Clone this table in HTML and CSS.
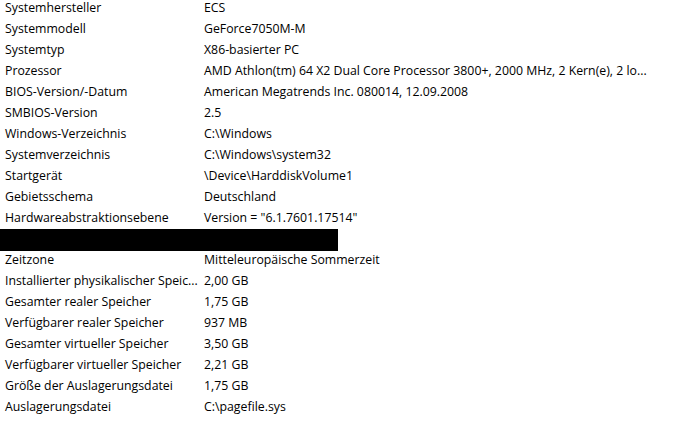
FILE: index.html
```html
<!DOCTYPE html>
<html lang="de">
<head>
<meta charset="utf-8">
<title>Systeminformationen</title>
<link rel="stylesheet" href="styles.css">
</head>
<body>
<div class="list">
  <div class="row"><div class="key">Systemhersteller</div><div class="val">ECS</div></div>
  <div class="row"><div class="key">Systemmodell</div><div class="val">GeForce7050M-M</div></div>
  <div class="row"><div class="key">Systemtyp</div><div class="val">X86-basierter PC</div></div>
  <div class="row"><div class="key">Prozessor</div><div class="val">AMD Athlon(tm) 64 X2 Dual Core Processor 3800+, 2000 MHz, 2 Kern(e), 2 lo...</div></div>
  <div class="row"><div class="key">BIOS-Version/-Datum</div><div class="val">American Megatrends Inc. 080014, 12.09.2008</div></div>
  <div class="row"><div class="key">SMBIOS-Version</div><div class="val">2.5</div></div>
  <div class="row"><div class="key">Windows-Verzeichnis</div><div class="val">C:\Windows</div></div>
  <div class="row"><div class="key">Systemverzeichnis</div><div class="val">C:\Windows\system32</div></div>
  <div class="row"><div class="key">Startgerät</div><div class="val">\Device\HarddiskVolume1</div></div>
  <div class="row"><div class="key">Gebietsschema</div><div class="val">Deutschland</div></div>
  <div class="row"><div class="key">Hardwareabstraktionsebene</div><div class="val">Version = "6.1.7601.17514"</div></div>
  <div class="row redacted"><div class="bar"></div></div>
  <div class="row"><div class="key">Zeitzone</div><div class="val">Mitteleuropäische Sommerzeit</div></div>
  <div class="row"><div class="key">Installierter physikalischer Speic...</div><div class="val">2,00 GB</div></div>
  <div class="row"><div class="key">Gesamter realer Speicher</div><div class="val">1,75 GB</div></div>
  <div class="row"><div class="key">Verfügbarer realer Speicher</div><div class="val">937 MB</div></div>
  <div class="row"><div class="key">Gesamter virtueller Speicher</div><div class="val">3,50 GB</div></div>
  <div class="row"><div class="key">Verfügbarer virtueller Speicher</div><div class="val">2,21 GB</div></div>
  <div class="row"><div class="key">Größe der Auslagerungsdatei</div><div class="val">1,75 GB</div></div>
  <div class="row"><div class="key">Auslagerungsdatei</div><div class="val">C:\pagefile.sys</div></div>
</div>
</body>
</html>
```
FILE: styles.css
```css
html, body {
  margin: 0;
  padding: 0;
  background: #ffffff;
  overflow: hidden;
}
body {
  font-family: "Open Sans", "Noto Sans", sans-serif;
  font-size: 12.3px;
  color: #000000;
}
.list {
  margin-top: -3px;
  display: flex;
  flex-direction: column;
}
.row {
  display: grid;
  grid-template-columns: 199px 475px;
  height: 21px;
  line-height: 21px;
}
.key {
  padding-left: 5px;
  white-space: nowrap;
}
.val {
  padding-left: 5px;
  white-space: nowrap;
}
.redacted {
  display: block;
  height: 22px;
  margin-top: 1px;
  margin-bottom: -2px;
}
.bar {
  width: 338px;
  height: 22px;
  background: #000000;
}
```
